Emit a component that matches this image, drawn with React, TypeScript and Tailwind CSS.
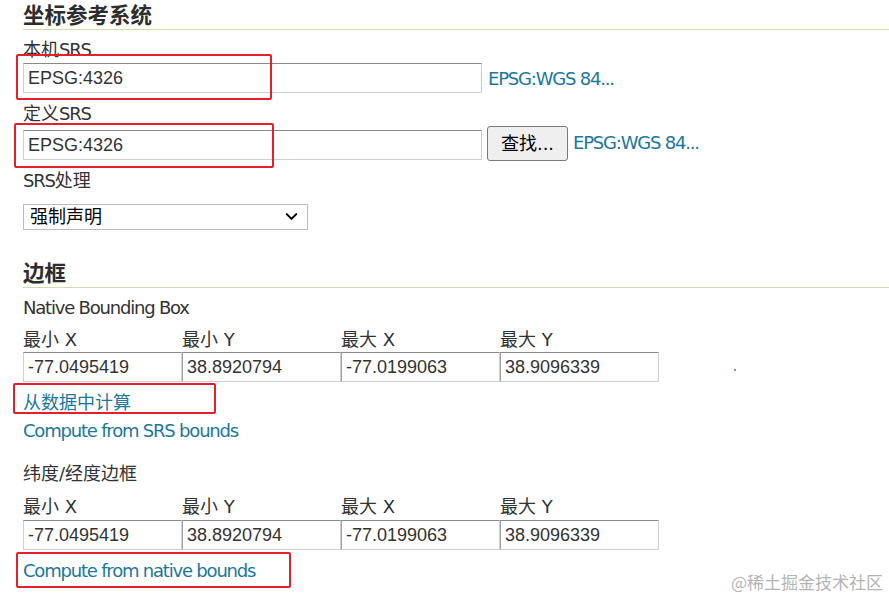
import React from 'react';
import { ChevronDown } from 'lucide-react';

const LINK = 'text-[#1b789b] cursor-pointer';

// Latin words: DejaVu Sans pulled tighter so it runs at Tahoma widths
const L: React.FC<{ children: React.ReactNode }> = ({ children }) => (
  <span className="tracking-[-1.2px]">{children}</span>
);

const SectionTitle: React.FC<{ title: string; className?: string }> = ({ title, className = '' }) => (
  <h2
    className={`h-[29px] border-b border-[#d5dbb0] text-[21.5px] leading-[29px] font-bold text-[#2d2d2d] ${className}`}
  >
    {title}
  </h2>
);

const TextInput: React.FC<{ value: string; className?: string }> = ({ value, className = '' }) => (
  <input
    readOnly
    value={value}
    className={`h-[30px] border border-[#cfcfcf] border-t-[#8a8a8a] bg-white px-[4px] font-['Liberation_Sans','Noto_Sans_CJK_SC',sans-serif] text-[18px] text-[#333] outline-none ${className}`}
  />
);

const BBox: React.FC<{ values: string[]; inputGap: string }> = ({ values, inputGap }) => {
  const labels = ['最小 X', '最小 Y', '最大 X', '最大 Y'];
  return (
    <div className="grid grid-cols-[159px_159px_159px_159px]">
      {labels.map((l) => {
        const [zh, en] = l.split(' ');
        return (
          <div key={l} className="h-[22px] leading-[22px]">
            {zh} <L>{en}</L>
          </div>
        );
      })}
      {values.map((v, i) => (
        <TextInput
          key={i}
          value={v}
          className={`${inputGap} w-[159px] ${i > 0 ? 'border-l-[#a0a0a0]' : ''}`}
        />
      ))}
    </div>
  );
};

const Annotation: React.FC<{ className: string }> = ({ className }) => (
  <div className={`pointer-events-none absolute rounded-[2px] border-2 border-[#e5202a] ${className}`} />
);

export default function App() {
  const values = ['-77.0495419', '38.8920794', '-77.0199063', '38.9096339'];

  return (
    <div className="relative h-[600px] w-full overflow-hidden bg-white font-['DejaVu_Sans','Noto_Sans_CJK_SC',sans-serif] text-[18px] text-[#333]">
      <div className="pl-[23px] pt-[1px]">
        {/* 坐标参考系统 */}
        <SectionTitle title="坐标参考系统" />

        <div className="mt-[9px] h-[22px] leading-[22px]">
          本机<L>SRS</L>
        </div>
        <div className="mt-[2px] flex items-center">
          <TextInput value="EPSG:4326" className="w-[459px]" />
          <span className={`ml-[6px] ${LINK}`}>
            <L>EPSG:WGS 84...</L>
          </span>
        </div>

        <div className="mt-[10px] h-[22px] leading-[22px]">
          定义<L>SRS</L>
        </div>
        <div className="mt-[1px] flex items-end">
          <TextInput value="EPSG:4326" className="mb-[1px] w-[459px]" />
          <button className="ml-[5px] h-[35px] w-[81px] rounded-[3px] border border-[#7a7a7a] bg-[#efefef] text-[18px] text-black">
            查找...
          </button>
          <span className={`mb-[5px] ml-[5px] ${LINK}`}>
            <L>EPSG:WGS 84...</L>
          </span>
        </div>

        <div className="mt-[9px] h-[22px] leading-[22px]">
          <L>SRS</L>处理
        </div>
        <div className="relative mt-[11px] h-[26px] w-[285px]">
          <select className="h-full w-full appearance-none border border-[#bcbcbc] bg-white pl-[6px] text-[18px] leading-[22px] text-black outline-none">
            <option>强制声明</option>
          </select>
          <ChevronDown
            size={19}
            strokeWidth={2.6}
            className="pointer-events-none absolute right-[7px] top-[4px] text-black"
          />
        </div>

        {/* 边框 */}
        <SectionTitle title="边框" className="mt-[30px]" />

        <div className="mt-[9px] h-[22px] leading-[22px]">
          <L>Native Bounding Box</L>
        </div>
        <div className="mt-[10px]">
          <BBox values={values} inputGap="mt-[1px]" />
        </div>
        <div className={`mt-[10px] h-[22px] leading-[22px] ${LINK}`}>从数据中计算</div>
        <div className={`mt-[6px] h-[22px] leading-[22px] ${LINK}`}>
          <L>Compute from SRS bounds</L>
        </div>

        <div className="mt-[21px] h-[22px] leading-[22px]">纬度/经度边框</div>
        <div className="mt-[11px]">
          <BBox values={values} inputGap="mt-[2px]" />
        </div>
        <div className={`mt-[10px] h-[22px] leading-[22px] ${LINK}`}>
          <L>Compute from native bounds</L>
        </div>
      </div>

      {/* red highlight boxes drawn over the form */}
      <Annotation className="left-[16px] top-[54px] h-[46px] w-[256px]" />
      <Annotation className="left-[14px] top-[123px] h-[45px] w-[260px]" />
      <Annotation className="left-[13px] top-[383px] h-[31px] w-[203px]" />
      <Annotation className="left-[16px] top-[552px] h-[36px] w-[275px]" />

      <div className="absolute left-[734px] top-[369px] h-[2px] w-[2px] rounded-full bg-[#d33a6e]" />

      <div className="absolute right-[6px] top-[571px] font-['Noto_Sans_CJK_SC',sans-serif] text-[17px] leading-[22px] text-[#b4b4b4]">
        @稀土掘金技术社区
      </div>
    </div>
  );
}
